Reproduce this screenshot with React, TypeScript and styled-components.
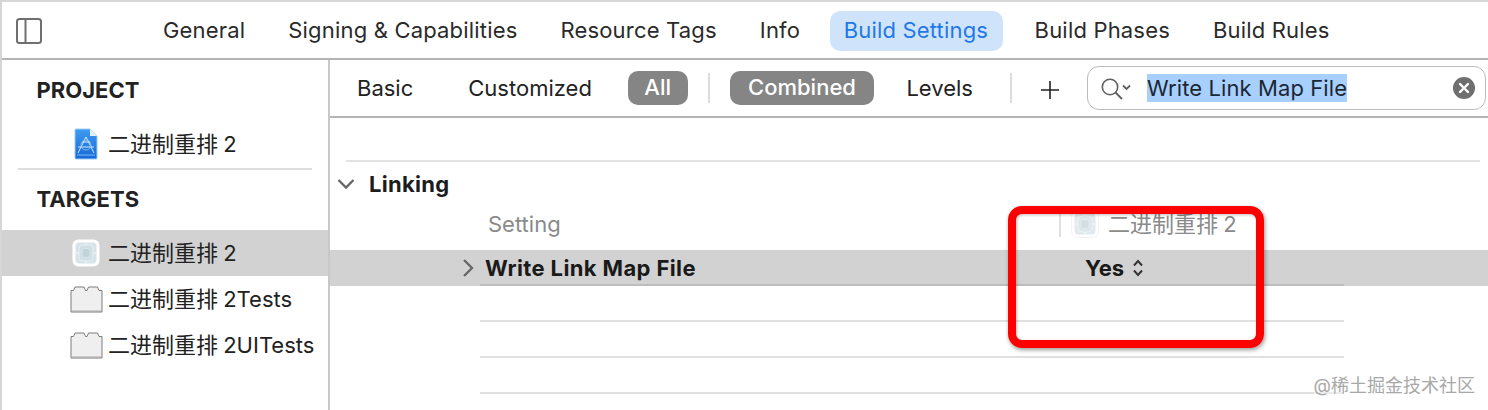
import React from 'react';
import styled, { createGlobalStyle } from 'styled-components';

const GlobalStyle = createGlobalStyle`
  html, body { margin: 0; padding: 0; background: #fff; }
  body { font-family: Inter, "Noto Sans CJK SC", sans-serif; color: #222; }
`;

const tabs = ['General', 'Signing & Capabilities', 'Resource Tags', 'Info', 'Build Settings', 'Build Phases', 'Build Rules'];
const cjkName = '二进制重排 2';

const PanelIcon = () => (
  <svg width="28" height="28" viewBox="0 0 28 28" fill="none" stroke="#6f6f6f" strokeWidth="2">
    <rect x="2" y="3" width="24" height="24" rx="2.5" />
    <path d="M10.5 3v24" />
  </svg>
);

const DocIcon = () => (
  <svg width="24" height="32" viewBox="0 0 24 32">
    <defs>
      <linearGradient id="docFill" x1="0" y1="0" x2="0" y2="1">
        <stop offset="0" stopColor="#3f9bf0" />
        <stop offset="1" stopColor="#1668d8" />
      </linearGradient>
    </defs>
    <path d="M2 1h14l7 7v22a1 1 0 0 1-1 1H2a1 1 0 0 1-1-1V2a1 1 0 0 1 1-1z" fill="url(#docFill)" stroke="#9ccbf5" />
    <path d="M16 1v7h7z" fill="#e6f1fc" />
    <path
      d="M12 9l-6 12M12 9l6 12M4 19h16M8 14h8M6 21l-2 4M18 21l2 4"
      stroke="#d6e9fc"
      strokeWidth="1"
      fill="none"
    />
    <circle cx="12" cy="17" r="5" fill="none" stroke="#8cc2f5" strokeWidth="0.8" />
    <path d="M3 27h18" stroke="#7db8f2" strokeWidth="1" />
  </svg>
);

const TargetIcon = ({ faded }: { faded?: boolean }) => (
  <svg width="28" height="28" viewBox="0 0 28 28" opacity={faded ? 0.75 : 1}>
    <rect x="0.5" y="0.5" width="27" height="27" rx="6" fill="#fff" stroke={faded ? '#f0f0f0' : 'none'} />
    <rect x="3.5" y="3.5" width="21" height="21" rx="4" fill="#d6e3e8" />
    <rect x="7" y="6" width="14" height="16" rx="4" fill="#cfdfe4" stroke="#e6f0f3" />
    <rect x="10" y="9.5" width="8" height="9" rx="2.5" fill="#c2d4da" stroke="#e0ebee" strokeWidth="0.7" />
    <path d="M4 14h3M21 14h3M14 4v2M14 22v2" stroke="#eef4f6" strokeWidth="1" />
  </svg>
);

const BrickIcon = () => (
  <svg width="33" height="27" viewBox="0 0 33 27">
    <path
      d="M1 26V4.5h2.5L5 1h9l1.5 3.5h1.5L18.5 1h9l1.5 3.5h3V26z"
      fill="#efefef"
      stroke="#7d7d7d"
      strokeWidth="1"
    />
    <path d="M2 25h29" stroke="#a8a8a8" strokeWidth="1" />
  </svg>
);

const SearchIcon = () => (
  <svg width="32" height="26" viewBox="0 0 32 26" fill="none" stroke="#5f5f5f">
    <circle cx="9" cy="12" r="7.7" strokeWidth="1.6" />
    <path d="M14.5 17.5l6.5 6.5" strokeWidth="1.8" />
    <path d="M22 10.5l3.5 3.5 3.5-3.5" strokeWidth="1.8" />
  </svg>
);

const ClearIcon = () => (
  <svg width="22" height="22" viewBox="0 0 22 22">
    <circle cx="11" cy="11" r="11" fill="#6f6f6f" />
    <path d="M7 7l8 8M15 7l-8 8" stroke="#fff" strokeWidth="2.4" strokeLinecap="round" />
  </svg>
);

const Chevron = ({ down }: { down?: boolean }) => (
  <svg width="18" height="18" viewBox="0 0 18 18" fill="none" stroke="#666" strokeWidth="2.3">
    <path d={down ? 'M1.5 5l7.5 7.5L16.5 5' : 'M5 1l8 8-8 8'} />
  </svg>
);

const UpDown = () => (
  <svg width="12" height="18" viewBox="0 0 12 18" fill="none" stroke="#333" strokeWidth="1.9">
    <path d="M2 6.5L6 2l4 4.5M2 11.5L6 16l4-4.5" />
  </svg>
);

const App: React.FC = () => (
  <>
    <GlobalStyle />
    <Window>
      <TabBar>
        <PanelToggle>
          <PanelIcon />
        </PanelToggle>
        <Tabs>
          {tabs.map((t) => (
            <Tab key={t} $active={t === 'Build Settings'}>
              {t}
            </Tab>
          ))}
        </Tabs>
      </TabBar>
      <Body>
        <Sidebar>
          <SideHeading>PROJECT</SideHeading>
          <SideRow>
            <IconSlot>
              <DocIcon />
            </IconSlot>
            <CjkLabel>{cjkName}</CjkLabel>
          </SideRow>
          <SideDivider />
          <SideHeading>TARGETS</SideHeading>
          <SideRow $selected>
            <IconSlot>
              <TargetIcon />
            </IconSlot>
            <CjkLabel>{cjkName}</CjkLabel>
          </SideRow>
          <SideRow>
            <IconSlot>
              <BrickIcon />
            </IconSlot>
            <CjkLabel>{cjkName}Tests</CjkLabel>
          </SideRow>
          <SideRow>
            <IconSlot>
              <BrickIcon />
            </IconSlot>
            <CjkLabel>{cjkName}UITests</CjkLabel>
          </SideRow>
        </Sidebar>
        <Main>
          <FilterBar>
            <FilterGroup $gap={21}>
              <FilterItem>Basic</FilterItem>
              <FilterItem>Customized</FilterItem>
              <FilterPill $pad={16.5} $pull={2}>
                All
              </FilterPill>
            </FilterGroup>
            <FilterSep />
            <FilterGroup $gap={15}>
              <FilterPill $pad={18.5}>Combined</FilterPill>
              <FilterItem>Levels</FilterItem>
            </FilterGroup>
            <FilterSep />
            <PlusSign>
              <svg width="18" height="18" viewBox="0 0 18 18" stroke="#222" strokeWidth="1.6">
                <path d="M9 0v18M0 9h18" />
              </svg>
            </PlusSign>
            <SearchBox>
              <SearchIcon />
              <SearchText>Write Link Map File</SearchText>
              <ClearIcon />
            </SearchBox>
          </FilterBar>
          <Settings>
            <TopRule />
            <GroupTitle>
              <Chevron down />
              Linking
            </GroupTitle>
            <HeaderRow>
              <HeaderLabel>Setting</HeaderLabel>
              <HeaderValue>
                <TargetIcon faded />
                <CjkLabel>{cjkName}</CjkLabel>
              </HeaderValue>
            </HeaderRow>
            <SelectedRow>
              <RowGutter>
                <Chevron />
              </RowGutter>
              <RowCells>
                <RowName>Write Link Map File</RowName>
                <RowValue>
                  Yes
                  <UpDown />
                </RowValue>
              </RowCells>
            </SelectedRow>
            <EmptyRow />
            <EmptyRow />
            <EmptyRow />
          </Settings>
        </Main>
      </Body>
      <Highlight />
      <Watermark>@稀土掘金技术社区</Watermark>
    </Window>
  </>
);

const Window = styled.div`
  position: relative;
  width: 1488px;
  height: 410px;
  box-sizing: border-box;
  border-top: 2px solid #d6d6d6;
  border-left: 2px solid #d6d6d6;
  overflow: hidden;
`;

const TabBar = styled.div`
  display: flex;
  align-items: center;
  height: 56px;
  border-bottom: 2px solid #b4b4b4;
`;

const PanelToggle = styled.div`
  display: flex;
  width: 139.5px;
  padding-left: 13px;
  box-sizing: border-box;
`;

const Tabs = styled.div`
  display: flex;
  align-items: center;
  margin-top: 2px;
`;

const Tab = styled.div<{ $active?: boolean }>`
  height: 40px;
  line-height: 38px;
  padding: ${(p) => (p.$active ? '0 15px 0 14px' : '0 21.5px')};
  margin: ${(p) => (p.$active ? '0 10px 0 8px' : '0')};
  border-radius: 10px;
  font-size: 22px;
  letter-spacing: 0.18px;
  color: ${(p) => (p.$active ? '#1f78e8' : '#2a2a2a')};
  background: ${(p) => (p.$active ? '#cfe4fb' : 'transparent')};
`;

const Body = styled.div`
  display: flex;
  height: 350px;
`;

const Sidebar = styled.div`
  width: 326px;
  flex: none;
  padding-top: 1px;
  border-right: 2px solid #c8c8c8;
`;

const SideHeading = styled.div`
  height: 60px;
  line-height: 58px;
  padding-left: 34.5px;
  font-size: 22px;
  font-weight: 700;
  color: #222;
`;

const SideRow = styled.div<{ $selected?: boolean }>`
  display: flex;
  align-items: center;
  height: 46px;
  font-size: 22px;
  color: #222;
  background: ${(p) => (p.$selected ? '#d2d2d2' : 'transparent')};
`;

/* the CJK fallback sits low in its line box, so lift it back onto the row centre */
const CjkLabel = styled.span`
  padding-bottom: 5px;
  word-spacing: -1px;
`;

const IconSlot = styled.div`
  display: flex;
  justify-content: center;
  width: 106px;
  padding: 0 4px 0 66px;
  box-sizing: border-box;
`;

const SideDivider = styled.div`
  height: 2px;
  margin: 1px 16px 0;
  background: #dedede;
`;

const Main = styled.div`
  flex: 1;
  min-width: 0;
`;

const FilterBar = styled.div`
  display: flex;
  align-items: center;
  gap: 20px;
  height: 56px;
  padding-left: 10px;
  border-bottom: 2px solid #b4b4b4;
`;

const FilterGroup = styled.div<{ $gap: number }>`
  display: flex;
  align-items: center;
  gap: ${(p) => p.$gap}px;
`;

const FilterItem = styled.div`
  padding: 0 17px;
  font-size: 22px;
  color: #222;
`;

const FilterPill = styled.div<{ $pad: number; $pull?: number }>`
  height: 34px;
  line-height: 33px;
  padding: 0 ${(p) => p.$pad}px;
  margin-left: ${(p) => -(p.$pull ?? 0)}px;
  border-radius: 10px;
  background: #858585;
  color: #fff;
  font-size: 22px;
  font-weight: 500;
`;

const FilterSep = styled.div`
  width: 2px;
  height: 30px;
  background: #dcdcdc;
`;

const PlusSign = styled.div`
  display: flex;
  margin: 4px 8px 0 9px;
`;

const SearchBox = styled.div`
  display: flex;
  align-items: center;
  width: 399px;
  height: 44px;
  box-sizing: border-box;
  padding: 0 10px 0 13px;
  border: 1px solid #bcbcbc;
  border-radius: 12px;
`;

const SearchText = styled.span`
  flex: none;
  width: 200px;
  height: 28px;
  line-height: 28px;
  margin: 0 auto 0 14px;
  background: #a8d0ff;
  font-size: 22px;
  letter-spacing: 0.1px;
  color: #1c2733;
  white-space: nowrap;
`;

const Settings = styled.div`
  padding-top: 42px;
`;

const TopRule = styled.div`
  height: 2px;
  margin: 0 8px 0 16px;
  background: #e2e2e2;
`;

const GroupTitle = styled.div`
  display: flex;
  align-items: center;
  gap: 14px;
  height: 44px;
  padding-left: 7px;
  font-size: 22px;
  font-weight: 700;
  letter-spacing: 0.3px;
  color: #1c1c1c;
`;

const HeaderRow = styled.div`
  display: flex;
  align-items: center;
  height: 44px;
  padding: 0 0 8px 158px;
  box-sizing: border-box;
  font-size: 22px;
  color: #8a8a8a;
`;

const HeaderLabel = styled.div`
  width: 571px;
`;

const HeaderValue = styled.div`
  display: flex;
  align-items: center;
  gap: 9px;
  height: 26px;
  padding-left: 10px;
  border-left: 2px solid #e0e0e0;
`;

const SelectedRow = styled.div`
  display: flex;
  height: 36px;
  background: #d2d2d2;
`;

const RowGutter = styled.div`
  display: flex;
  align-items: center;
  justify-content: flex-end;
  width: 150px;
  padding-right: 3px;
  box-sizing: border-box;
`;

const RowCells = styled.div`
  display: flex;
  align-items: center;
  width: 864px;
  box-sizing: border-box;
  padding-top: 2px;
  border-bottom: 2px solid #bdbdbd;
  font-size: 22px;
  font-weight: 700;
  color: #1a1a1a;
`;

const RowName = styled.div`
  width: 605px;
  padding-left: 5px;
  box-sizing: border-box;
  letter-spacing: 0.38px;
`;

const RowValue = styled.div`
  display: flex;
  align-items: center;
  gap: 8px;
`;

const EmptyRow = styled.div`
  height: 36px;
  width: 864px;
  margin-left: 150px;
  box-sizing: border-box;
  border-bottom: 2px solid #e0e0e0;
`;

const Highlight = styled.div`
  position: absolute;
  left: 1006px;
  top: 204px;
  width: 256px;
  height: 142px;
  box-sizing: border-box;
  border: 8px solid #fe0000;
  border-radius: 14px;
  box-shadow: 1px 2px 4px rgba(0, 0, 0, 0.4), inset 1px 1px 3px rgba(0, 0, 0, 0.25);
`;

const Watermark = styled.div`
  position: absolute;
  right: 13px;
  bottom: 13px;
  font-size: 18px;
  line-height: 22px;
  color: #a8a8a8;
  background: rgba(255, 255, 255, 0.4);
`;

export default App;
